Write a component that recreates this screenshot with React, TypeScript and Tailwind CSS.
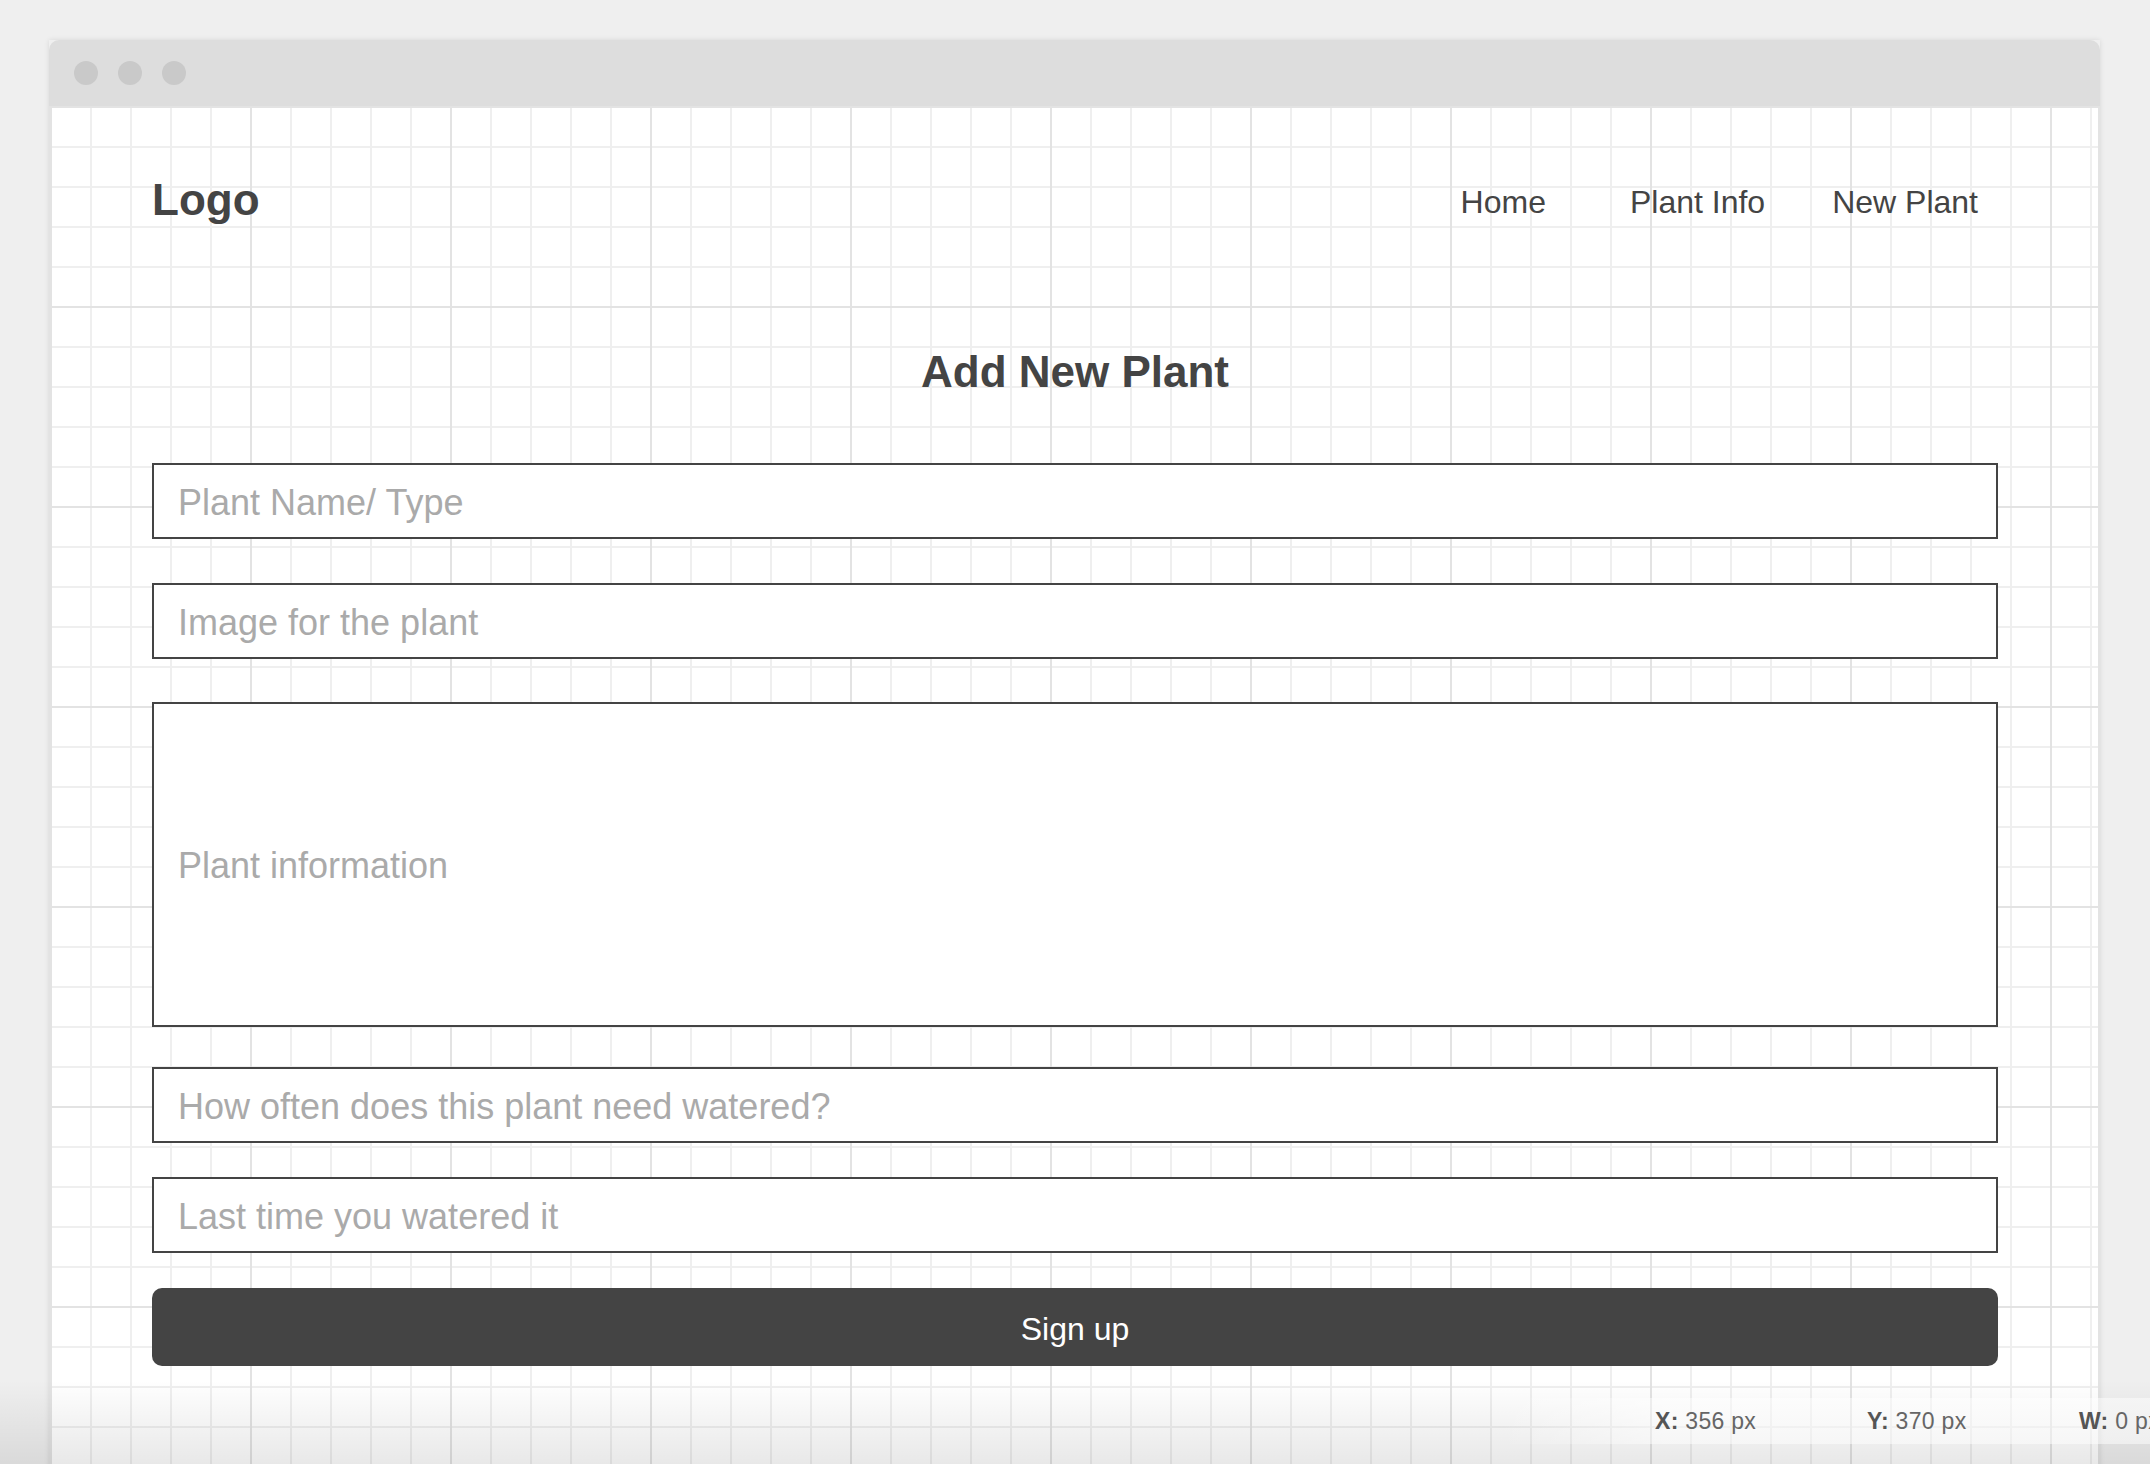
import React from "react";

function Field({ label, tall }: { label: string; tall?: boolean }) {
  return (
    <div
      className={`flex items-center border-2 border-[#444444] bg-white pl-[24px] pt-[3px] ${
        tall ? "h-[325px]" : "h-[76px]"
      }`}
    >
      <span className="text-[36px] leading-[40px] text-[#aaaaaa]">{label}</span>
    </div>
  );
}

export default function App() {
  return (
    <div className="relative h-[1464px] w-[2150px] overflow-hidden bg-[#efefef] font-['Liberation_Sans',Arial,sans-serif]">
      <div className="ml-[49px] mt-[40px] w-[2051px] shadow-[0_0_5px_rgba(0,0,0,0.10)]">
        <div className="flex h-[66px] items-center gap-[20px] rounded-t-[10px] bg-[#dddddd] pl-[25px]">
          <span className="h-[24px] w-[24px] rounded-full bg-[#c9c9c9]" />
          <span className="h-[24px] w-[24px] rounded-full bg-[#c9c9c9]" />
          <span className="h-[24px] w-[24px] rounded-full bg-[#c9c9c9]" />
        </div>
        <div className="h-[1400px] border-x-2 border-[#e3e3e3] bg-white bg-[linear-gradient(to_right,#e3e3e3_2px,transparent_2px),linear-gradient(to_bottom,#e3e3e3_2px,transparent_2px),linear-gradient(to_right,#efefef_2px,transparent_2px),linear-gradient(to_bottom,#efefef_2px,transparent_2px)] bg-[size:200px_200px,200px_200px,40px_40px,40px_40px] bg-[position:-1px_0] pl-[101px] pr-[100px] pt-[69px]">
          <header className="flex items-center justify-between">
            <div className="text-[44px] font-bold leading-[50px] text-[#444444]">Logo</div>
            <nav className="mt-[4px] flex items-center pr-[20px] text-[32px] leading-[40px] text-[#444444]">
              <a>Home</a>
              <a className="ml-[84px]">Plant Info</a>
              <a className="ml-[67px]">New Plant</a>
            </nav>
          </header>
          <h1 className="mt-[122px] text-center text-[44px] font-bold leading-[50px] text-[#444444]">
            Add New Plant
          </h1>
          <div className="mt-[66px] flex flex-col">
            <Field label="Plant Name/ Type" />
            <div className="mt-[44px]">
              <Field label="Image for the plant" />
            </div>
            <div className="mt-[43px]">
              <Field label="Plant information" tall />
            </div>
            <div className="mt-[40px]">
              <Field label="How often does this plant need watered?" />
            </div>
            <div className="mt-[34px]">
              <Field label="Last time you watered it" />
            </div>
            <button className="mt-[35px] flex h-[78px] items-center justify-center rounded-[10px] bg-[#444444] pt-[3px] text-[32px] leading-[40px] text-white">
              Sign up
            </button>
          </div>
        </div>
      </div>
      <div className="pointer-events-none absolute bottom-0 left-0 right-0 h-[84px] bg-linear-to-b from-black/0 to-black/[0.09]" />
      <div className="absolute left-[1500px] right-0 top-[1398px] flex h-[46px] items-center bg-linear-to-r from-white/0 from-0% to-white/50 to-25% pl-[155px] text-[23px] leading-[46px] tracking-[0.3px] text-[#666666]">
        <span className="w-[212px] shrink-0 whitespace-nowrap">
          <b className="text-[#555555]">X:</b> 356 px
        </span>
        <span className="w-[212px] shrink-0 whitespace-nowrap">
          <b className="text-[#555555]">Y:</b> 370 px
        </span>
        <span className="w-[212px] shrink-0 whitespace-nowrap">
          <b className="text-[#555555]">W:</b> 0 px
        </span>
      </div>
    </div>
  );
}
